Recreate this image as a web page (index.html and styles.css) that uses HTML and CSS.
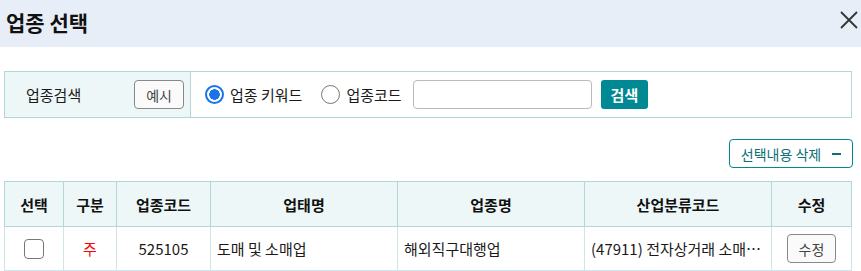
FILE: index.html
```html
<!DOCTYPE html>
<html>
  <head>
    <title>업종 선택</title>
    <link rel="stylesheet" href="styles.css">
  </head>
  <body>
    <div class="modal-header">
      <h2>업종 선택</h2>
      <button class="close-btn" aria-label="닫기">
        <svg width="18" height="18" viewBox="0 0 18 18"><path d="M1 1L17 17M17 1L1 17" stroke="#333" stroke-width="1.8" fill="none"/></svg>
      </button>
    </div>

    <div class="modal-body">
      <div class="search-box">
        <div class="search-label">
          <span>업종검색</span>
          <button class="btn-small">예시</button>
        </div>
        <div class="search-field">
          <label class="radio"><input type="radio" name="type" checked /> 업종 키워드</label>
          <label class="radio"><input type="radio" name="type" /> 업종코드</label>
          <input type="text" class="search-input" />
          <button class="btn-search">검색</button>
        </div>
      </div>

      <div class="actions">
        <button class="btn-outline">선택내용 삭제 <span class="minus"></span></button>
      </div>

      <table class="result-table">
        <colgroup>
          <col style="width: 59px">
          <col style="width: 53px">
          <col style="width: 94px">
          <col style="width: 187px">
          <col style="width: 187px">
          <col style="width: 187px">
          <col style="width: 80px">
        </colgroup>
        <thead>
          <tr>
            <th>선택</th>
            <th>구분</th>
            <th>업종코드</th>
            <th>업태명</th>
            <th>업종명</th>
            <th>산업분류코드</th>
            <th>수정</th>
          </tr>
        </thead>
        <tbody>
          <tr>
            <td class="center"><input type="checkbox" class="check" /></td>
            <td class="center main">주</td>
            <td class="center">525105</td>
            <td>도매 및 소매업</td>
            <td>해외직구대행업</td>
            <td><div class="ellipsis">(47911) 전자상거래 소매중개업</div></td>
            <td class="center"><button class="btn-small">수정</button></td>
          </tr>
        </tbody>
      </table>
    </div>
  </body>
</html>
```

FILE: styles.css
```css
* {
  box-sizing: border-box;
}

body {
  margin: 0;
  font-family: "Noto Sans CJK KR", "Noto Sans", sans-serif;
  font-size: 15px;
  color: #1a1a1a;
  background: #fff;
}

button {
  font-family: inherit;
  cursor: pointer;
}

.modal-header {
  height: 47px;
  background-color: #e8eef8;
  display: flex;
  align-items: center;
  justify-content: space-between;
  padding: 0 3px 0 6px;
}

.modal-header h2 {
  margin: 0;
  font-size: 21px;
  font-weight: 700;
  color: #111;
  margin-top: -4px;
}

.close-btn {
  border: none;
  background: none;
  padding: 0;
  width: 18px;
  height: 18px;
  margin-top: -8px;
}

.modal-body {
  padding: 24px 9px 0 4px;
}

.search-box {
  display: flex;
  height: 47px;
  border: 1px solid #b4d6db;
}

.search-label {
  width: 186px;
  background-color: #eef7f7;
  border-right: 1px solid #b4d6db;
  display: flex;
  align-items: center;
  justify-content: space-between;
  padding: 0 6px 0 21px;
}

.search-field {
  display: flex;
  align-items: center;
  padding-left: 14px;
}

.radio {
  display: flex;
  align-items: center;
  margin-right: 19px;
  cursor: pointer;
}

.radio input {
  appearance: none;
  width: 19px;
  height: 19px;
  margin: 0 6px 0 0;
  border: 1px solid #777;
  border-radius: 50%;
  background: #fff;
}

.radio input:checked {
  border: 2px solid #1a73e8;
  background: radial-gradient(circle, #1a73e8 0 5px, #fff 5.5px);
}

.search-input {
  width: 179px;
  height: 29px;
  border: 1px solid #bbb;
  border-radius: 4px;
  padding: 0;
  margin: 0 9px 0 -8px;
}

.btn-small {
  height: 29px;
  padding: 0 11px;
  font-size: 14px;
  color: #444;
  background: #fafafa;
  border: 1px solid #888;
  border-radius: 4px;
}

.btn-search {
  height: 29px;
  padding: 0 10px;
  font-size: 15px;
  font-weight: 700;
  color: #fff;
  background-color: #008893;
  border: none;
  border-radius: 3px;
}

.actions {
  display: flex;
  justify-content: flex-end;
  margin: 21px -1px 13px 0;
}

.btn-outline {
  height: 29px;
  width: 124px;
  font-size: 14px;
  color: #0b6f78;
  background: #fff;
  border: 1px solid #008893;
  border-radius: 4px;
  display: flex;
  align-items: center;
  justify-content: center;
  padding: 0;
}

.minus {
  display: inline-block;
  width: 9px;
  height: 2px;
  background-color: #0b6f78;
  margin-left: 11px;
}

.result-table {
  width: 848px;
  border-collapse: collapse;
  table-layout: fixed;
}

.result-table th,
.result-table td {
  border: 1px solid #b4d6db;
  padding: 0 6px;
}

.result-table th {
  height: 45px;
  background-color: #eef7f7;
  font-weight: 700;
  color: #111;
}

.result-table td {
  height: 44px;
}

.result-table tbody td {
  border-color: #cfe5e8;
}

.center {
  text-align: center;
}

.result-table td.main {
  color: #f00;
}

.ellipsis {
  overflow: hidden;
  white-space: nowrap;
  text-overflow: ellipsis;
}

.check {
  appearance: none;
  width: 20px;
  height: 20px;
  margin: 4px 0 0;
  border: 1px solid #777;
  border-radius: 4px;
  background: #fff;
}
```
